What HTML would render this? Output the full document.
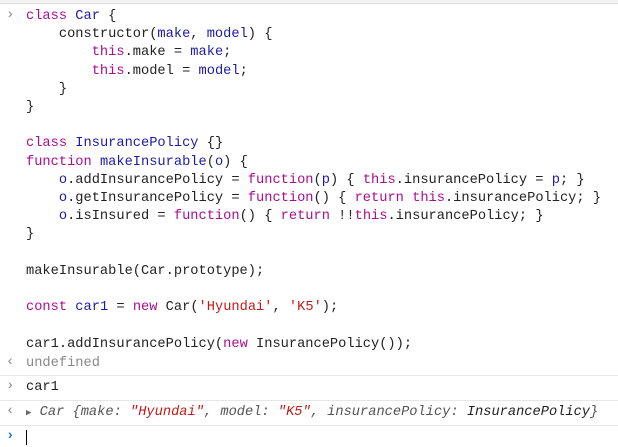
<!DOCTYPE html>
<html><head><style>
body{margin:0;width:618px;height:447px;background:#fff;overflow:hidden;position:relative;font-family:"Liberation Mono",monospace;font-size:13.7px;color:#222}
.top{position:absolute;left:0;top:0;width:618px;height:3px;border-bottom:1px solid #ddd;background:#f3f3f3}
pre{position:absolute;left:26px;top:8px;margin:0;font:inherit;line-height:18.2px;white-space:pre}
.k{color:#aa0d91}.v{color:#1c1aa6}.s{color:#c41a16}
.p{position:absolute;left:6px;color:#888;font-size:14px}
.ln{position:absolute;left:0;width:618px;border-top:1px solid #e6e6e6}
.r{position:absolute;left:26px;white-space:pre}
i{font-style:italic}
</style></head><body>
<div class="top"></div>
<span class="p" style="top:7px">&#x203A;</span>
<pre><span class="k">class</span> <span class="v">Car</span> {
    constructor(<span class="v">make</span>, <span class="v">model</span>) {
        <span class="k">this</span>.make = <span class="v">make</span>;
        <span class="k">this</span>.model = <span class="v">model</span>;
    }
}

<span class="k">class</span> <span class="v">InsurancePolicy</span> {}
<span class="k">function</span> <span class="v">makeInsurable</span>(<span class="v">o</span>) {
    <span class="v">o</span>.addInsurancePolicy = <span class="k">function</span>(<span class="v">p</span>) { <span class="k">this</span>.insurancePolicy = <span class="v">p</span>; }
    <span class="v">o</span>.getInsurancePolicy = <span class="k">function</span>() { <span class="k">return</span> <span class="k">this</span>.insurancePolicy; }
    <span class="v">o</span>.isInsured = <span class="k">function</span>() { <span class="k">return</span> !!<span class="k">this</span>.insurancePolicy; }
}

makeInsurable(Car.prototype);

<span class="k">const</span> <span class="v">car1</span> = <span class="k">new</span> Car(<span class="s">'Hyundai'</span>, <span class="s">'K5'</span>);

car1.addInsurancePolicy(<span class="k">new</span> InsurancePolicy());</pre>
<span class="p" style="top:354px">&#x2039;</span>
<div class="r" style="top:356px;color:#888">undefined</div>
<div class="ln" style="top:375px"></div>
<span class="p" style="top:378px">&#x203A;</span>
<div class="r" style="top:380px">car1</div>
<div class="ln" style="top:400px"></div>
<span class="p" style="top:403px">&#x2039;</span>
<div class="r" style="top:405px;color:#555"><span style="font-size:9px;color:#666">&#9654;</span> <i>Car {make: <span class="s">"Hyundai"</span>, model: <span class="s">"K5"</span>, insurancePolicy: <span style="color:#222">InsurancePolicy</span>}</i></div>
<div class="ln" style="top:425px"></div>
<span class="p" style="top:428px;color:#1a73e8;font-weight:bold">&#x203A;</span>
<div style="position:absolute;left:26px;top:430px;width:1px;height:15px;background:#000"></div>
</body></html>
